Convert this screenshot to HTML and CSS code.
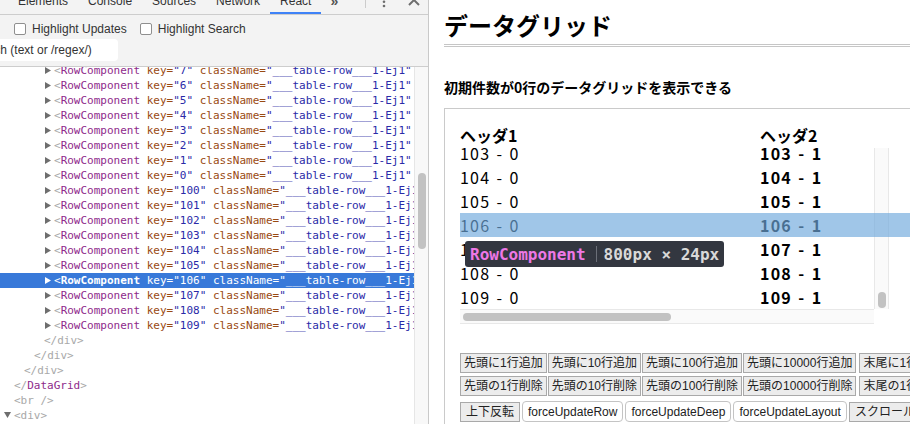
FILE: index.html
```html
<!DOCTYPE html>
<html lang="ja">
<head>
<meta charset="utf-8">
<title>DataGrid</title>
<link rel="stylesheet" href="styles.css">
</head>
<body>
<div class="devtools">
  <div class="tabbar">
    <span class="tab">Elements</span>
    <span class="tab">Console</span>
    <span class="tab">Sources</span>
    <span class="tab">Network</span>
    <span class="tab active">React</span>
    <span class="more">»</span>
    <span class="vsep"></span>
    <svg class="kebab" width="4" height="14" viewBox="0 0 4 14"><circle cx="2" cy="-2.6" r="1.3"/><circle cx="2" cy="1.7" r="1.3"/><circle cx="2" cy="6" r="1.3"/></svg>
    <svg class="close" width="12" height="12" viewBox="0 0 12 12"><path d="M1 1 L11 11 M11 1 L1 11"/></svg>
  </div>
  <div class="toolbar">
    <div class="checks">
      <span class="cb"></span><span class="cblabel">Highlight Updates</span>
      <span class="cb cb2"></span><span class="cblabel">Highlight Search</span>
    </div>
    <div class="search">Search (text or /regex/)</div>
  </div>
  <div class="treewrap">
    <div class="tree">
      <div class="row lv4"><span class="arr"><svg width="6" height="7" viewBox="0 0 6 7"><polygon points="0,0 6,3.5 0,7"/></svg></span><span class="p">&lt;</span><span class="tn">RowComponent</span> <span class="an">key=</span><span class="av">"7"</span> <span class="an">className=</span><span class="av">"___table-row___1-Ej1"</span></div>
      <div class="row lv4"><span class="arr"><svg width="6" height="7" viewBox="0 0 6 7"><polygon points="0,0 6,3.5 0,7"/></svg></span><span class="p">&lt;</span><span class="tn">RowComponent</span> <span class="an">key=</span><span class="av">"6"</span> <span class="an">className=</span><span class="av">"___table-row___1-Ej1"</span></div>
      <div class="row lv4"><span class="arr"><svg width="6" height="7" viewBox="0 0 6 7"><polygon points="0,0 6,3.5 0,7"/></svg></span><span class="p">&lt;</span><span class="tn">RowComponent</span> <span class="an">key=</span><span class="av">"5"</span> <span class="an">className=</span><span class="av">"___table-row___1-Ej1"</span></div>
      <div class="row lv4"><span class="arr"><svg width="6" height="7" viewBox="0 0 6 7"><polygon points="0,0 6,3.5 0,7"/></svg></span><span class="p">&lt;</span><span class="tn">RowComponent</span> <span class="an">key=</span><span class="av">"4"</span> <span class="an">className=</span><span class="av">"___table-row___1-Ej1"</span></div>
      <div class="row lv4"><span class="arr"><svg width="6" height="7" viewBox="0 0 6 7"><polygon points="0,0 6,3.5 0,7"/></svg></span><span class="p">&lt;</span><span class="tn">RowComponent</span> <span class="an">key=</span><span class="av">"3"</span> <span class="an">className=</span><span class="av">"___table-row___1-Ej1"</span></div>
      <div class="row lv4"><span class="arr"><svg width="6" height="7" viewBox="0 0 6 7"><polygon points="0,0 6,3.5 0,7"/></svg></span><span class="p">&lt;</span><span class="tn">RowComponent</span> <span class="an">key=</span><span class="av">"2"</span> <span class="an">className=</span><span class="av">"___table-row___1-Ej1"</span></div>
      <div class="row lv4"><span class="arr"><svg width="6" height="7" viewBox="0 0 6 7"><polygon points="0,0 6,3.5 0,7"/></svg></span><span class="p">&lt;</span><span class="tn">RowComponent</span> <span class="an">key=</span><span class="av">"1"</span> <span class="an">className=</span><span class="av">"___table-row___1-Ej1"</span></div>
      <div class="row lv4"><span class="arr"><svg width="6" height="7" viewBox="0 0 6 7"><polygon points="0,0 6,3.5 0,7"/></svg></span><span class="p">&lt;</span><span class="tn">RowComponent</span> <span class="an">key=</span><span class="av">"0"</span> <span class="an">className=</span><span class="av">"___table-row___1-Ej1"</span></div>
      <div class="row lv4"><span class="arr"><svg width="6" height="7" viewBox="0 0 6 7"><polygon points="0,0 6,3.5 0,7"/></svg></span><span class="p">&lt;</span><span class="tn">RowComponent</span> <span class="an">key=</span><span class="av">"100"</span> <span class="an">className=</span><span class="av">"___table-row___1-Ej1"</span></div>
      <div class="row lv4"><span class="arr"><svg width="6" height="7" viewBox="0 0 6 7"><polygon points="0,0 6,3.5 0,7"/></svg></span><span class="p">&lt;</span><span class="tn">RowComponent</span> <span class="an">key=</span><span class="av">"101"</span> <span class="an">className=</span><span class="av">"___table-row___1-Ej1"</span></div>
      <div class="row lv4"><span class="arr"><svg width="6" height="7" viewBox="0 0 6 7"><polygon points="0,0 6,3.5 0,7"/></svg></span><span class="p">&lt;</span><span class="tn">RowComponent</span> <span class="an">key=</span><span class="av">"102"</span> <span class="an">className=</span><span class="av">"___table-row___1-Ej1"</span></div>
      <div class="row lv4"><span class="arr"><svg width="6" height="7" viewBox="0 0 6 7"><polygon points="0,0 6,3.5 0,7"/></svg></span><span class="p">&lt;</span><span class="tn">RowComponent</span> <span class="an">key=</span><span class="av">"103"</span> <span class="an">className=</span><span class="av">"___table-row___1-Ej1"</span></div>
      <div class="row lv4"><span class="arr"><svg width="6" height="7" viewBox="0 0 6 7"><polygon points="0,0 6,3.5 0,7"/></svg></span><span class="p">&lt;</span><span class="tn">RowComponent</span> <span class="an">key=</span><span class="av">"104"</span> <span class="an">className=</span><span class="av">"___table-row___1-Ej1"</span></div>
      <div class="row lv4"><span class="arr"><svg width="6" height="7" viewBox="0 0 6 7"><polygon points="0,0 6,3.5 0,7"/></svg></span><span class="p">&lt;</span><span class="tn">RowComponent</span> <span class="an">key=</span><span class="av">"105"</span> <span class="an">className=</span><span class="av">"___table-row___1-Ej1"</span></div>
      <div class="row lv4 sel"><span class="arr"><svg width="6" height="7" viewBox="0 0 6 7"><polygon points="0,0 6,3.5 0,7"/></svg></span><span class="p">&lt;</span><span class="tn">RowComponent</span> <span class="an">key=</span><span class="av">"106"</span> <span class="an">className=</span><span class="av">"___table-row___1-Ej1"</span></div>
      <div class="row lv4"><span class="arr"><svg width="6" height="7" viewBox="0 0 6 7"><polygon points="0,0 6,3.5 0,7"/></svg></span><span class="p">&lt;</span><span class="tn">RowComponent</span> <span class="an">key=</span><span class="av">"107"</span> <span class="an">className=</span><span class="av">"___table-row___1-Ej1"</span></div>
      <div class="row lv4"><span class="arr"><svg width="6" height="7" viewBox="0 0 6 7"><polygon points="0,0 6,3.5 0,7"/></svg></span><span class="p">&lt;</span><span class="tn">RowComponent</span> <span class="an">key=</span><span class="av">"108"</span> <span class="an">className=</span><span class="av">"___table-row___1-Ej1"</span></div>
      <div class="row lv4"><span class="arr"><svg width="6" height="7" viewBox="0 0 6 7"><polygon points="0,0 6,3.5 0,7"/></svg></span><span class="p">&lt;</span><span class="tn">RowComponent</span> <span class="an">key=</span><span class="av">"109"</span> <span class="an">className=</span><span class="av">"___table-row___1-Ej1"</span></div>
      <div class="row lv3"><span class="arr"></span><span class="p">&lt;/div&gt;</span></div>
      <div class="row lv2"><span class="arr"></span><span class="p">&lt;/div&gt;</span></div>
      <div class="row lv1"><span class="arr"></span><span class="p">&lt;/div&gt;</span></div>
      <div class="row lv0"><span class="arr"></span><span class="p">&lt;/</span><span class="tn">DataGrid</span><span class="p">&gt;</span></div>
      <div class="row lv0"><span class="arr"></span><span class="p">&lt;br /&gt;</span></div>
      <div class="row lv0"><span class="arr down"><svg width="7" height="6" viewBox="0 0 7 6"><polygon points="0,0 7,0 3.5,6"/></svg></span><span class="p">&lt;div&gt;</span></div>
    </div>
    <div class="tscroll"><div class="tthumb"></div></div>
  </div>
</div>

<div class="page">
  <h1 class="title">データグリッド</h1>
  <h2 class="sub">初期件数が0行のデータグリッドを表示できる</h2>
  <div class="box">
    <div class="grid">
      <div class="ghead"><span class="c1">ヘッダ1</span><span class="c2">ヘッダ2</span></div>
      <div class="gbody">
        <div class="viewport">
          <div class="rows">
            <div class="grow"><span class="c1">103 - 0</span><span class="c2">103 - 1</span></div>
            <div class="grow"><span class="c1">104 - 0</span><span class="c2">104 - 1</span></div>
            <div class="grow"><span class="c1">105 - 0</span><span class="c2">105 - 1</span></div>
            <div class="grow"><span class="c1">106 - 0</span><span class="c2">106 - 1</span></div>
            <div class="grow"><span class="c1">107 - 0</span><span class="c2">107 - 1</span></div>
            <div class="grow"><span class="c1">108 - 0</span><span class="c2">108 - 1</span></div>
            <div class="grow"><span class="c1">109 - 0</span><span class="c2">109 - 1</span></div>
          </div>
        </div>
        <div class="vscroll"><div class="vthumb"></div></div>
        <div class="hscroll"><div class="hthumb"></div></div>
        <div class="corner"></div>
      </div>
    </div>
    <div class="buttons">
      <div class="brow">
        <button class="btn">先頭に1行追加</button>
        <button class="btn">先頭に10行追加</button>
        <button class="btn">先頭に100行追加</button>
        <button class="btn">先頭に10000行追加</button>
        <button class="btn gapl">末尾に1行追加</button>
      </div>
      <div class="brow">
        <button class="btn">先頭の1行削除</button>
        <button class="btn">先頭の10行削除</button>
        <button class="btn">先頭の100行削除</button>
        <button class="btn">先頭の10000行削除</button>
        <button class="btn gapl">末尾の1行削除</button>
      </div>
      <div class="brow brow3">
        <button class="btn wide">上下反転</button>
        <button class="nbtn">forceUpdateRow</button>
        <button class="nbtn">forceUpdateDeep</button>
        <button class="nbtn">forceUpdateLayout</button>
        <button class="btn wide">スクロールテスト</button>
      </div>
    </div>
    <div class="hl"></div>
    <div class="tip"><span class="tipname">RowComponent</span><span class="tipsep"></span><span class="tipdim">800px × 24px</span></div>
  </div>
</div>
</body>
</html>
```

FILE: styles.css
```css
* { box-sizing: border-box; }
html, body { margin: 0; padding: 0; }
body {
  width: 910px;
  height: 424px;
  overflow: hidden;
  display: flex;
  background: #fff;
  font-family: "Liberation Sans", Arial, sans-serif;
}

/* ---------- devtools ---------- */
.devtools {
  width: 429px;
  flex: none;
  display: flex;
  flex-direction: column;
  border-right: 1px solid #c9c9c9;
  background: #fff;
  overflow: hidden;
}
.tabbar {
  height: 28px;
  margin-top: -13px;
  flex: none;
  display: flex;
  align-items: center;
  padding-left: 8px;
  background: #f3f3f3;
  border-bottom: 1px solid #cdcdcd;
  font-size: 12px;
  color: #333;
}
.tab {
  height: 100%;
  display: flex;
  align-items: center;
  padding: 2px 10px 0 10px;
  border-bottom: 2px solid transparent;
}
.tab.active { border-bottom-color: #3e82f7; }
.more { margin-left: 9px; font-size: 14px; font-weight: bold; color: #555; padding-top: 1px; }
.vsep { width: 1px; height: 21px; background: #ccc; margin-left: 27px; align-self: flex-start; }
.kebab { margin-left: 16px; fill: #6e6e6e; overflow: visible; align-self: flex-start; margin-top: 13px; }
.close { margin-left: 22px; stroke: #6e6e6e; stroke-width: 2; fill: none; align-self: flex-start; margin-top: 7px; }

.toolbar {
  flex: none;
  height: 52px;
  padding-top: 4px;
  background: #f3f3f3;
  border-bottom: 1px solid #cdcdcd;
  font-size: 12px;
  color: #333;
}
.checks {
  height: 20px;
  display: flex;
  align-items: center;
  padding-left: 14px;
}
.cb {
  width: 12px;
  height: 12px;
  border: 1px solid #8f8f8f;
  border-radius: 2px;
  background: #fff;
  flex: none;
}
.cb2 { margin-left: 13px; }
.cblabel { margin-left: 6px; }
.search {
  height: 22px;
  width: 161px;
  margin-left: -43px;
  padding-left: 12px;
  line-height: 22px;
  background: #fff;
  border-radius: 4px;
  color: #333;
}

.treewrap {
  flex: 1;
  display: flex;
  overflow: hidden;
}
.tree {
  width: 414px;
  flex: none;
  overflow: hidden;
  margin-top: -4px;
  font-family: "DejaVu Sans Mono", Menlo, monospace;
  font-size: 11px;
}
.row {
  height: 15px;
  line-height: 15px;
  white-space: nowrap;
  overflow: hidden;
}
.lv0 { padding-left: 5px; }
.lv1 { padding-left: 15px; }
.lv2 { padding-left: 25px; }
.lv3 { padding-left: 35px; }
.lv4 { padding-left: 45px; }
.arr {
  display: inline-block;
  width: 9px;
  height: 7px;
  vertical-align: 0;
  fill: #6e6e6e;
}
.arr svg { display: block; }
.arr.down svg { margin-left: -1px; }
.p { color: #a8a8a8; }
.tn { color: #8e2a8b; }
.an { color: #9a4a12; }
.av { color: #2a2aa8; }
.sel { background: #3879d9; }
.sel .p, .sel .tn, .sel .an, .sel .av { color: #fff; }
.sel .arr { fill: #fff; }
.sel .tn { font-weight: bold; }

.tscroll {
  width: 14px;
  flex: none;
  background: #f8f8f8;
  border-left: 1px solid #e6e6e6;
  padding-top: 106px;
  padding-left: 3px;
}
.tthumb {
  width: 8px;
  height: 76px;
  border-radius: 4px;
  background: #c2c2c2;
}

/* ---------- page ---------- */
.page {
  flex: 1;
  padding-left: 15px;
  overflow: hidden;
  font-family: "Noto Sans CJK JP", "Liberation Sans", sans-serif;
  color: #000;
}
.title {
  margin: 0;
  padding-top: 8px;
  padding-bottom: 2px;
  height: 47px;
  font-size: 24px;
  line-height: 34px;
  font-weight: bold;
  border-bottom: 3px double #c6c6c6;
  width: 600px;
}
.sub {
  margin: 30px 0 0 0;
  font-size: 14px;
  line-height: 20px;
  font-weight: bold;
}
.box {
  position: relative;
  margin-top: 11px;
  width: 620px;
  height: 340px;
  border: 1px solid #cacaca;
  padding: 13px 0 0 15px;
}
.grid { width: 429px; }
.ghead {
  height: 26px;
  line-height: 26px;
  display: flex;
  font-size: 16px;
  font-weight: bold;
}
.c1 { width: 300px; flex: none; }
.c2 { flex: none; }
.grow .c2 { font-weight: bold; }
.gbody {
  display: grid;
  grid-template-columns: 414px 15px;
  grid-template-rows: 161px 15px;
}
.viewport { overflow: hidden; }
.rows { margin-top: -7px; width: 800px; }
.grow {
  height: 24px;
  line-height: 24px;
  display: flex;
  font-size: 16px;
  letter-spacing: 1.2px;
  word-spacing: 1.5px;
}
.vscroll {
  background: #fafafa;
  border-left: 1px solid #e8e8e8;
  border-right: 1px solid #e8e8e8;
  padding-left: 3px;
  padding-top: 144px;
}
.vthumb { width: 8px; height: 16px; border-radius: 4px; background: #c2c2c2; }
.hscroll {
  background: #fafafa;
  border-top: 1px solid #e8e8e8;
  border-bottom: 1px solid #e8e8e8;
  padding-top: 3px;
  padding-left: 3px;
}
.hthumb { width: 208px; height: 8px; border-radius: 4px; background: #c2c2c2; }
.corner { background: #fff; }

.buttons {
  margin-top: 29px;
  display: flex;
  flex-direction: column;
  gap: 3px;
}
.brow { display: flex; gap: 1px; white-space: nowrap; align-items: center; }
.brow3 { margin-top: 2px; gap: 2px; }
.btn, .nbtn {
  font-family: "Liberation Sans", "Noto Sans CJK JP", sans-serif;
  font-size: 12px;
  line-height: 16px;
  color: #222;
  margin: 0;
  flex: none;
}
.btn {
  height: 20px;
  padding: 1px 3px;
  background: #ececec;
  border: 1px solid #a9a9a9;
  border-radius: 0;
}
.btn.wide { padding: 1px 5px; }
.gapl { margin-left: 2px; }
.nbtn {
  height: 21px;
  padding: 1px 5px;
  background: #fff;
  border: 1px solid #c4c4c4;
  border-radius: 4px;
}

.hl {
  position: absolute;
  left: 15px;
  top: 104px;
  width: 800px;
  height: 24px;
  background: rgba(111, 168, 220, 0.66);
}
.tip {
  position: absolute;
  left: 20px;
  top: 132px;
  height: 26px;
  display: flex;
  align-items: center;
  padding: 0 5px;
  background: #333740;
  border-radius: 3px;
  font-family: "DejaVu Sans Mono", monospace;
  font-size: 16px;
  font-weight: bold;
  white-space: nowrap;
}
.tipname { color: #ee78e6; }
.tipsep { width: 1px; height: 16px; background: #6b6f78; margin: 0 7px 0 10px; }
.tipdim { color: #d9d9d9; }
```
